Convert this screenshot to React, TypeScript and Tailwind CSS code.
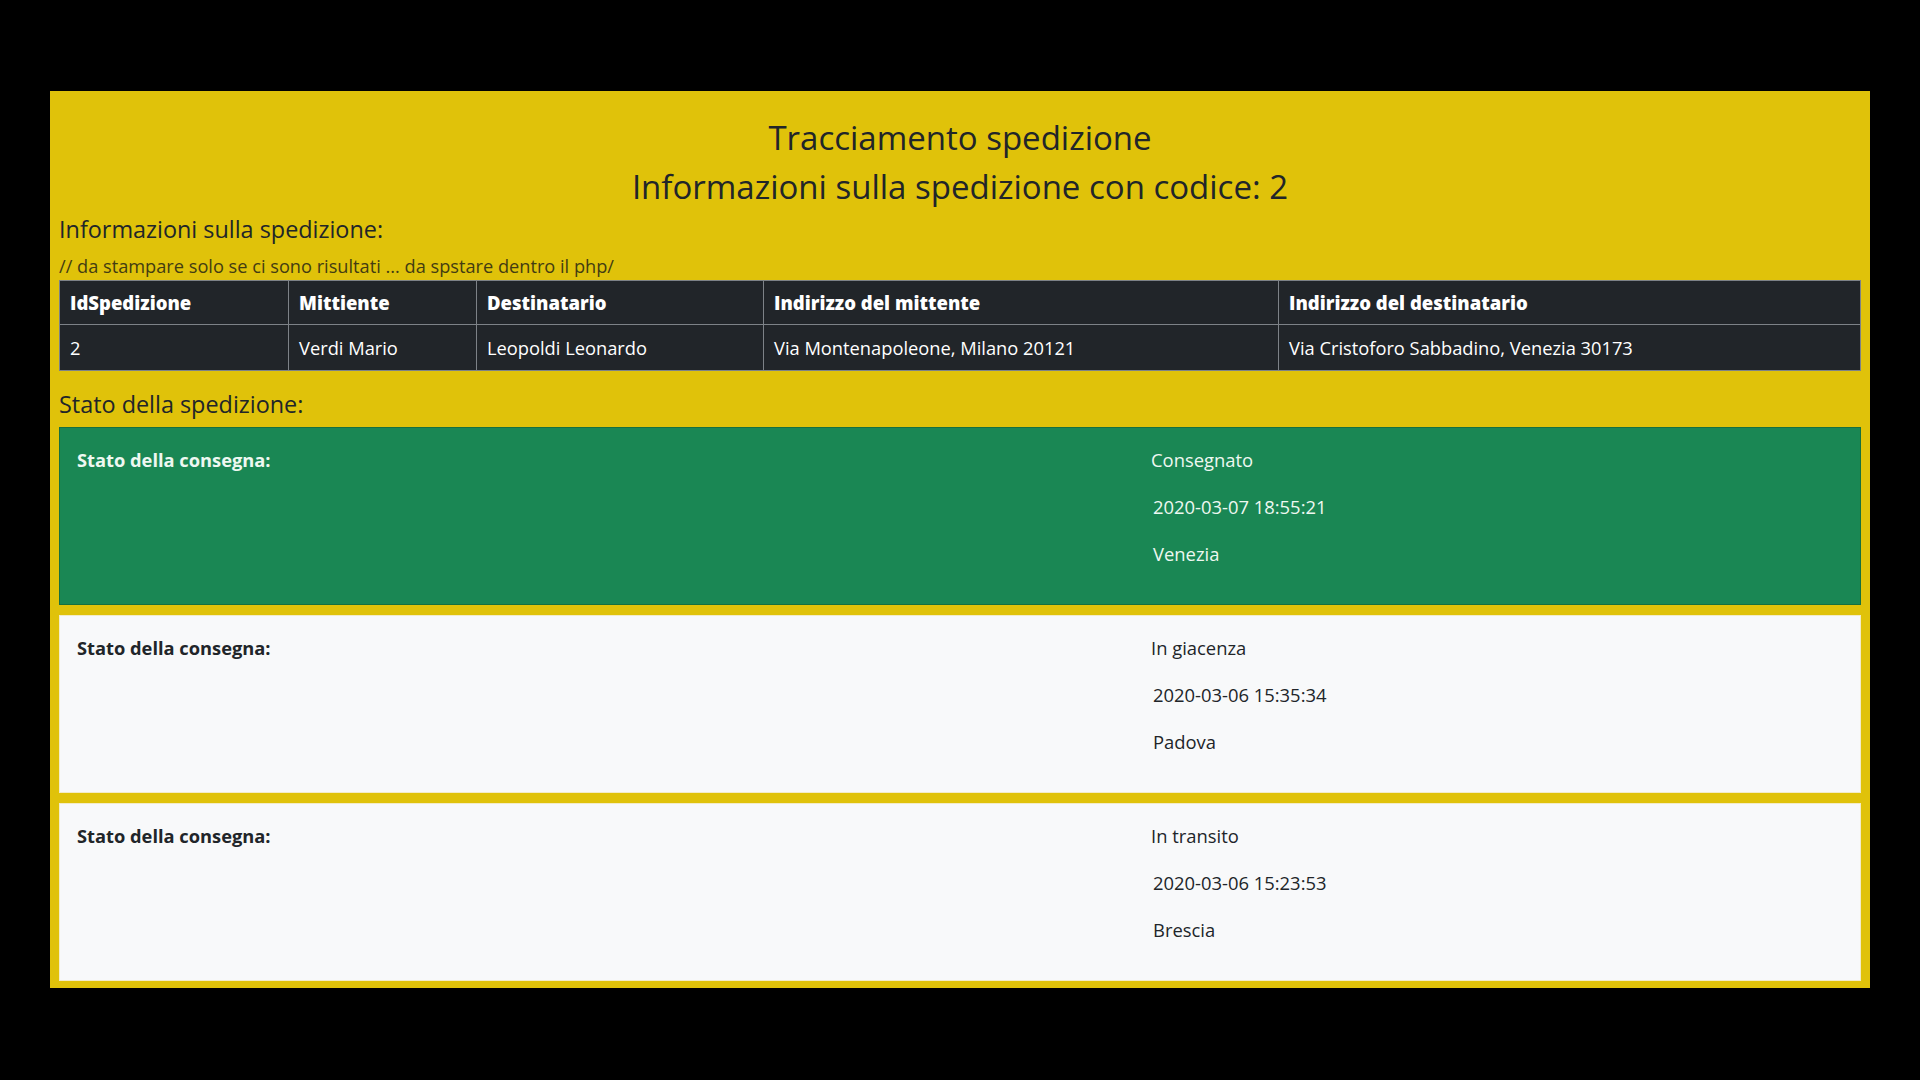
import React from "react";

const font = { fontFamily: '"Open Sans", "Noto Sans", sans-serif' };

const rows = [
  { stato: "Consegnato", data: "2020-03-07 18:55:21", luogo: "Venezia", green: true },
  { stato: "In giacenza", data: "2020-03-06 15:35:34", luogo: "Padova", green: false },
  { stato: "In transito", data: "2020-03-06 15:23:53", luogo: "Brescia", green: false },
];

function Card({ stato, data, luogo, green }: { stato: string; data: string; luogo: string; green: boolean }) {
  return (
    <div
      className={
        green
          ? "h-[178px] border border-[#17703f] bg-[#1a8754] text-[#eef8f1] flex pt-[20px] pl-[17px]"
          : "h-[178px] border border-[#f3ecc8] bg-[#f8f9fa] text-[#212529] flex pt-[20px] pl-[17px]"
      }
    >
      <div className="w-[1074px] text-[18.3px] leading-[24px] font-bold">Stato della consegna:</div>
      <div className="flex flex-col gap-[23px] text-[18.4px] leading-[24px]">
        <div>{stato}</div>
        <div className="pl-[2px]">{data}</div>
        <div className="pl-[2px]">{luogo}</div>
      </div>
    </div>
  );
}

export default function App() {
  const th = "border border-[#7d8287] px-[10px] text-left font-extrabold text-[18.5px] h-[44px]";
  const td = "border border-[#7d8287] px-[10px] text-left font-normal text-[18.3px] h-[46px]";
  return (
    <div className="w-[1920px] h-[1080px] bg-black pt-[91px] px-[50px]" style={font}>
      <div className="bg-[#e0c20a] px-[9px] pt-[22px] pb-[7px] text-[#212529]">
        <div className="text-center text-[33px] leading-[49px] font-normal">
          <div>Tracciamento spedizione</div>
          <div>Informazioni sulla spedizione con codice: 2</div>
        </div>
        <div className="mt-[3px] text-[23.4px] leading-[30px]">Informazioni sulla spedizione:</div>
        <div className="mt-[11px] mb-[3px] text-[18.2px] leading-[22px] text-[#433c12]">
          // da stampare solo se ci sono risultati ... da spstare dentro il php/
        </div>
        <table className="w-full table-fixed border-collapse bg-[#212529] text-white">
          <colgroup>
            <col className="w-[229px]" />
            <col className="w-[188px]" />
            <col className="w-[287px]" />
            <col className="w-[515px]" />
            <col />
          </colgroup>
          <thead>
            <tr>
              <th className={th}>IdSpedizione</th>
              <th className={th}>Mittiente</th>
              <th className={th}>Destinatario</th>
              <th className={th}>Indirizzo del mittente</th>
              <th className={th}>Indirizzo del destinatario</th>
            </tr>
          </thead>
          <tbody>
            <tr>
              <td className={td}>2</td>
              <td className={td}>Verdi Mario</td>
              <td className={td}>Leopoldi Leonardo</td>
              <td className={td}>Via Montenapoleone, Milano 20121</td>
              <td className={td}>Via Cristoforo Sabbadino, Venezia 30173</td>
            </tr>
          </tbody>
        </table>
        <div className="mt-[18px] mb-[8px] text-[23.4px] leading-[30px]">Stato della spedizione:</div>
        <div className="flex flex-col gap-[10px]">
          {rows.map((r) => (
            <Card key={r.stato} {...r} />
          ))}
        </div>
      </div>
    </div>
  );
}
